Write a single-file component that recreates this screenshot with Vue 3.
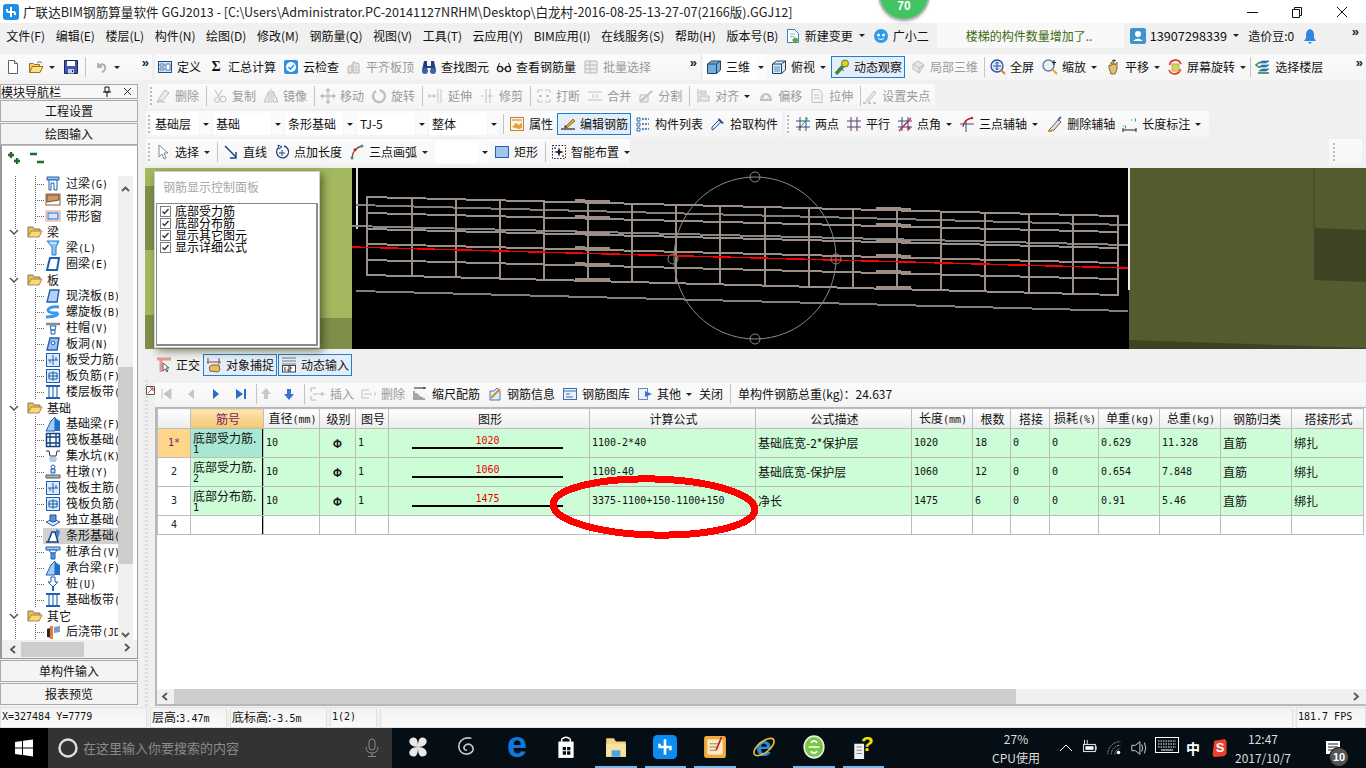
<script setup>
import { h } from 'vue'

const I = {
  app: '<rect x="0" y="0" width="16" height="16" rx="3" fill="#1d8fe8"/><path d="M8 3v10M4 8h8M4 5v3M12 8v3" stroke="#fff" stroke-width="2" fill="none"/>',
  new: '<path d="M3.500 1.500h6l3 3v10h-9z" fill="#fff" stroke="#5a6478"/><path d="M9.500 1.500v3h3" fill="#dfe4ee" stroke="#5a6478"/>',
  open: '<path d="M1.500 13.500v-9h4l1 1h5v2" fill="#f3cf63" stroke="#9b7418"/><path d="M1.500 13.500l3-6h10.500l-3 6z" fill="#fbe08a" stroke="#9b7418"/><path d="M9 4q3-3 5 0" fill="none" stroke="#3a8a4a"/>',
  save: '<path d="M1.500 1.500h13v13h-13z" fill="#3f57b8" stroke="#1c2450"/><path d="M4 2h8v5H4z" fill="#fff"/><path d="M5 10h6v4.500H5z" fill="#c8d0e8"/><path d="M9 11h1v2H9z" fill="#223"/>',
  undo: '<path d="M5 4v4h4M5.500 7.500C8 4 13 5 12 10q-.5 2-3 3.500" fill="none" stroke="#b0b0b0" stroke-width="2"/>',
  def: '<rect x="1.500" y="2.500" width="13" height="11" fill="#cfe3f7" stroke="#1f4f8f"/><path d="M3 5h4v2H3zM3 9h4v2H3zM9 5h4v6H9z" fill="#fff" stroke="#1f4f8f" stroke-width=".7"/>',
  cloud: '<rect x="1" y="1" width="14" height="14" rx="2" fill="#2f8fe0"/><circle cx="8" cy="8" r="5" fill="#fff"/><path d="M5.500 8l2 2 3.500-4" fill="none" stroke="#2f8fe0" stroke-width="1.600"/>',
  flat: '<path d="M2 14V8l4-2v8zM7 14V3l6 2v9z" fill="#e4e4e4" stroke="#b4b4b4"/><path d="M9 8h2M9 11h2" stroke="#b4b4b4"/>',
  binoc: '<path d="M3 2h3v5h4V2h3l2 9H10V9H6v2H1z" fill="#23407e"/><circle cx="4" cy="12" r="3" fill="#3d62aa"/><circle cx="12" cy="12" r="3" fill="#3d62aa"/>',
  glass: '<circle cx="4" cy="10" r="2.600" fill="none" stroke="#222" stroke-width="1.400"/><circle cx="12" cy="10" r="2.600" fill="none" stroke="#222" stroke-width="1.400"/><path d="M6.500 10h3M1.500 9l2-5M14.500 9l-2-5" stroke="#222" fill="none"/>',
  batch: '<path d="M2 2h12v12H2zM2 6h12M2 10h12M7 2v12" fill="#ededed" stroke="#b8b8b8"/>',
  doc: '<path d="M2.500 1.500h7l4 4v9h-11z" fill="#fff" stroke="#3f7fc2"/><path d="M5 6h5M5 8.500h4" stroke="#8ab0d8"/><path d="M10 9l4 3-4 3.500-3-3.500z" fill="#5aa832"/>',
  bot: '<ellipse cx="8" cy="8" rx="7" ry="7" fill="#2f9be8"/><circle cx="5.500" cy="7" r="1.500" fill="#fff"/><circle cx="10.500" cy="7" r="1.500" fill="#fff"/><path d="M5 10.500q3 2 6 0" stroke="#fff" fill="none"/>',
  user: '<rect x="0" y="0" width="16" height="16" rx="2" fill="#3d94cf"/><circle cx="8" cy="6" r="3" fill="#fff"/><path d="M3 13q5-5 10 0z" fill="#fff"/>',
  bell: '<path d="M8 1q-4 1-4 6v3l-2 3h12l-2-3V7q0-5-4-6z" fill="#2f86ea"/><path d="M6 14h4l-2 2z" fill="#2f86ea"/>',
  cube: '<path d="M1.500 5l4-3h9v9l-4 3.500h-9z" fill="#6fb0dc" stroke="#24405c"/><path d="M1.500 5h9v9.500M10.500 5l4-3" fill="none" stroke="#24405c"/>',
  top: '<path d="M1.500 5l4-3h9v9l-4 3.500h-9z" fill="#dcecf8" stroke="#24405c"/><path d="M1.500 5h9v9.500M10.500 5l4-3" fill="none" stroke="#24405c"/><path d="M3 7h6v6H3z" fill="#8fc0e2"/>',
  orbit: '<path d="M2 15L9 7" stroke="#3e8a3e" stroke-width="3.500"/><circle cx="11" cy="4.500" r="3.500" fill="#d9d22a" stroke="#6a7a20"/><path d="M4 10q4-1 6 2" stroke="#2a6a9a" fill="none"/>',
  local: '<path d="M3 5l5-3 6 4-5 8-6-4z" fill="#e6e6e6" stroke="#bcbcbc"/><path d="M3 5l6 4 5-3M9 9v5" fill="none" stroke="#bcbcbc"/>',
  full: '<circle cx="7" cy="7" r="6" fill="#dbe8f8" stroke="#28509c" stroke-width="1.300"/><path d="M7 3v8M3 7h8M5.500 4.500L7 3l1.500 1.500M5.500 9.500L7 11l1.500-1.500" stroke="#28509c" fill="none"/><path d="M11 11l4 4" stroke="#d8841c" stroke-width="2"/>',
  zoom: '<circle cx="6.500" cy="6.500" r="5.500" fill="#e8f0f8" stroke="#6c7c90" stroke-width="1.400"/><path d="M11 11l4 4" stroke="#d8b01c" stroke-width="2.200"/><path d="M12 1v5M10 3.500h4" stroke="#222"/>',
  pan: '<path d="M4 9V6l2 1V3l2 3V2l2 4 2-3v7l-2 5H6z" fill="#e0bc7a" stroke="#8a6a2a"/><path d="M9 0v3M7 1.500h4" stroke="#555"/>',
  rot: '<path d="M2.500 6A6 6 0 0 1 14 5M13.500 10A6 6 0 0 1 2 11" stroke="#e0382c" stroke-width="1.600" fill="none"/><rect x="5" y="5" width="7" height="7" fill="#bfdc78" stroke="#e0a030"/>',
  floors: '<path d="M4 4l3-2h7l-3 2zM4 8l3-2h7l-3 2zM4 12l3-2h7l-3 2z" fill="#2c7fc0" stroke="#1c5a90" stroke-width=".6"/><path d="M5 3L1 6l4 3" stroke="#2a9a3c" stroke-width="1.500" fill="none"/><path d="M3 14h11" stroke="#2a7a3c" stroke-width="1.500"/>',
  del: '<path d="M2 14l3-5 5-7 4 3-6 7z" fill="#ececec" stroke="#bcbcbc"/><path d="M2 14h8" stroke="#bcbcbc"/>',
  copy: '<path d="M3 2l4 7M10 2L6 9" stroke="#bcbcbc" fill="none"/><circle cx="5" cy="12" r="2.400" fill="none" stroke="#bcbcbc"/><circle cx="11" cy="11" r="3" fill="none" stroke="#bcbcbc"/>',
  mirror: '<path d="M8 1v14M6 3L1 14h5zM10 3l5 11h-5z" fill="#eee" stroke="#bcbcbc"/>',
  move: '<path d="M8 1v14M1 8h14M6 3l2-2 2 2M6 13l2 2 2-2M3 6L1 8l2 2M13 6l2 2-2 2" stroke="#bcbcbc" fill="none" stroke-width="1.300"/>',
  rotate: '<path d="M11 3a6 6 0 1 1-6 0" stroke="#c0c0c0" stroke-width="2.400" fill="none"/><path d="M8 1l4 1-2 3z" fill="#c0c0c0"/>',
  extend: '<path d="M1 8h8M1 6v4M6 6v4" stroke="#c0c0c0"/><path d="M10 1v14M13 1v14" stroke="#c8c8c8"/>',
  trim: '<path d="M7 1v14M11 1v14M2 8h3M9 8h5" stroke="#c0c0c0"/>',
  brk: '<path d="M2 5V2h5M14 5V2H9M2 11v3h5M14 11v3H9" stroke="#c0c0c0" fill="none"/><path d="M3 8h3M13 8h-3" stroke="#c0c0c0" stroke-width="2"/>',
  merge: '<path d="M1 4h14M1 12h14M5 6l2 2-2 2M11 6L9 8l2 2" stroke="#c0c0c0" fill="none"/>',
  split: '<path d="M2 14V7l8 0v7z" fill="#eee" stroke="#bcbcbc"/><path d="M3 13L14 3" stroke="#c0c0c0" stroke-width="2"/>',
  align: '<path d="M3 1v14" stroke="#b8b8b8"/><path d="M5 3h6v3H5zM5 8h9v5H5z" fill="#e8e8e8" stroke="#bcbcbc"/>',
  offset: '<path d="M3 12a5 6 0 1 1 10 0z" fill="none" stroke="#c0c0c0" stroke-width="2"/><circle cx="8" cy="9" r="2.500" fill="none" stroke="#c8c8c8"/>',
  stretch: '<path d="M3 1.500h7l3 3v10H3z" fill="#f4f4f4" stroke="#c0c0c0"/><path d="M5 7h5M5 10h6" stroke="#c8c8c8"/>',
  setgrip: '<path d="M4 13L12 3l2 2-7 8z" fill="#ececec" stroke="#c0c0c0"/><path d="M1 15h3M6 15h3M11 15h3" stroke="#b8b8b8" stroke-width="1.500"/>',
  attr: '<rect x="1.500" y="1.500" width="13" height="13" fill="#fbf3df" stroke="#c9822a"/><path d="M3 11l4-4 3 2 3-3v6l-3 1z" fill="#dba23f"/><path d="M3 4h10" stroke="#c9822a"/>',
  edit: '<path d="M1 13h14" stroke="#222" stroke-width="1.200"/><path d="M5 11l8-8 2 2-8 7z" fill="#e4a530" stroke="#7a5012" stroke-width=".7"/><path d="M4 12l1-3 2 2z" fill="#333"/>',
  list: '<path d="M2 2h3v3H2zM2 7h3v3H2zM2 12h3v3H2z" fill="#fff" stroke="#2c6ab0"/><path d="M7 3h7M7 8h7M7 13h7" stroke="#2c6ab0" stroke-width="1.300" stroke-dasharray="2 1"/>',
  pick: '<path d="M2 14l2-1 7-7-2-2-7 7z" fill="#d9ebfb" stroke="#245aa0"/><path d="M9 2l5 5-2 1-4-4z" fill="#245aa0"/>',
  two: '<path d="M1 5h14M1 11h14" stroke="#2a4f90"/><path d="M5 1v14M11 1v14" stroke="#2a4f90"/><path d="M3 14L13 2" stroke="#3e9a3e"/><circle cx="5" cy="11" r="1" fill="#c02020"/><circle cx="11" cy="5" r="1" fill="#3e9a3e"/>',
  para: '<path d="M1 5h14M1 11h14" stroke="#2a4f90"/><path d="M5 1v14M11 1v14" stroke="#7a2a4a"/>',
  ang: '<path d="M1 5h14M1 11h14" stroke="#2a4f90"/><path d="M5 1v14M11 1v14" stroke="#2a4f90"/><path d="M2 15L14 2" stroke="#d02020" stroke-width="1.300"/><circle cx="12" cy="12" r="1.500" fill="#d02020"/>',
  tri: '<path d="M1 8h14M7 4v12" stroke="#2a4f90"/><path d="M4 11Q5 3 13 2" stroke="#c02020" fill="none" stroke-width="1.300"/><circle cx="13" cy="2" r="1.200" fill="#c02020"/>',
  delax: '<path d="M1 15l3-3 7-8 3 2-7 8z" fill="#e8ddd0" stroke="#6a5a70"/><path d="M11 4l3-3" stroke="#5a64b0" stroke-width="2"/><path d="M1 15h4" stroke="#d49020" stroke-width="2"/>',
  len: '<path d="M1 12v4M14 12v4M1 14h13" stroke="#222"/><path d="M3 11h1M13 4h1" stroke="#3aa03a" stroke-width="3"/><path d="M1 10h2M9 4h2" stroke="#3aa03a" stroke-dasharray="1 2"/>',
  sel: '<path d="M4 1v12l3-3 2 5 2-1-2-5h4z" fill="#fff" stroke="#7a8aa0"/>',
  line: '<path d="M2 2l11 11" stroke="#1f3f80" stroke-width="1.400"/><path d="M13 8v6H7" stroke="#1f3f80" stroke-width="1.400" fill="none"/>',
  plen: '<path d="M10 2a6 6 0 1 1-6 2" stroke="#1f3f80" stroke-width="1.300" fill="none"/><path d="M4 1l1 4 3-2zM8 6v6M5 9h6" stroke="#1f3f80" fill="none"/>',
  arc: '<path d="M3 14Q4 4 13 2" stroke="#a0463a" stroke-width="1.500" fill="none"/><circle cx="3" cy="14" r="1.500" fill="#2a9a9a"/><circle cx="6" cy="6" r="1.400" fill="#c02020"/><circle cx="13" cy="2" r="1.500" fill="#2a9a9a"/>',
  rect: '<rect x="1.500" y="2.500" width="13" height="11" fill="#a4c4f0" stroke="#2c5fb0"/>',
  smart: '<rect x="1.500" y="1.500" width="13" height="13" fill="#fff" stroke="#222" stroke-dasharray="1.500 1.500"/><path d="M8 3l1.500 5-1.500 5-1.500-5zM3 8l5-1.500 5 1.500-5 1.500z" fill="#223" /><circle cx="4" cy="4" r="1" fill="#1f5fb4"/><circle cx="12" cy="12" r="1" fill="#c03030"/>',
  ortho: '<path d="M1 2h14M5 2v13" stroke="#e49a90" stroke-width="3" fill="none"/><path d="M7 6v8l2-2 2 3 1-1-2-3h3z" fill="#fff" stroke="#556"/>',
  snap: '<path d="M2 1v6M1 5h14M13 1v6" stroke="#a04030"/><path d="M4 14q-2-5 2-6l7 0 1 5-2 2z" fill="#e3bc6c" stroke="#8a6420"/>',
  dyn: '<path d="M1 1h14M1 4h14M1 7h14" stroke="#777"/><rect x="1.500" y="8.500" width="13" height="6.500" fill="#fff" stroke="#444"/><path d="M4 10v4M7 10h3v2H7v2h3" stroke="#222" fill="none"/>',
  first: '<path d="M4 3v10M13 3L6 8l7 5z" fill="#c4c4c4" stroke="#c4c4c4"/>',
  prev: '<path d="M11 3L5 8l6 5z" fill="#c4c4c4"/>',
  next: '<path d="M5 3l6 5-6 5z" fill="#2a6cc8"/>',
  last: '<path d="M12 3v10" stroke="#2a6cc8" stroke-width="2"/><path d="M3 3l7 5-7 5z" fill="#2a6cc8"/>',
  up: '<path d="M8 2l5 6h-3v5H6V8H3z" fill="#c8c8c8"/>',
  down: '<path d="M8 14l5-6h-3V3H6v5H3z" fill="#3a74d0"/>',
  ins: '<path d="M1 2h5M1 2v4M1 10v4h5M9 8h6" stroke="#b8b8b8" fill="none"/><path d="M3 8h5M12 6v4" stroke="#b8b8b8"/>',
  del2: '<path d="M1 4h7M1 12h7M1 4v8" stroke="#c0c0c0" fill="none"/><path d="M3 8h8M13 6l2 2-2 2" stroke="#c0c0c0" fill="none"/>',
  scale: '<path d="M2 2h12M12 1v2" stroke="#222"/><path d="M2 5v9M4 7v7M6 8v6M8 10v4M10 11v3" stroke="#555"/><path d="M12 12v2" stroke="#555"/>',
  info: '<path d="M3 14V5h4l3-3 3 3v9z" fill="#dfe9f7" stroke="#4a78b8"/><path d="M4 12L13 3" stroke="#d08f30" stroke-width="2"/>',
  lib: '<rect x="1.500" y="2.500" width="13" height="11" fill="#eaf2fb" stroke="#3b6fb0"/><path d="M2 5h12M4 8h4M4 11h7" stroke="#3b6fb0"/>',
  other: '<rect x="1.500" y="2.500" width="9" height="11" fill="#eaf2fb" stroke="#6f8aa8"/><path d="M8 5l7 3-7 3z" fill="#3a74d0"/>',
  folder: '<path d="M1 13V3h5l1 2h6v2" fill="#e6c060" stroke="#8c7a4a"/><path d="M1 13l3-6h11l-3 6z" fill="#fdd870" stroke="#a08a50"/>',
  lintel: '<path d="M2 1h12v3H2z" fill="#9ac4ec" stroke="#1f5fb4"/><path d="M4 4h8v10h-3V7H6v7H4z" fill="#fff" stroke="#1f5fb4"/>',
  strip: '<rect x="1" y="2" width="14" height="11" fill="#fff" stroke="#8a5a30"/><path d="M2 3h12v5L2 10z" fill="#c89a6a" stroke="#7a4a20"/>',
  win: '<rect x="1" y="3" width="14" height="10" fill="#eef" stroke="#e8a08a"/><rect x="3" y="5" width="10" height="6" fill="#d4e4fa" stroke="#2c6ac0"/>',
  beam: '<path d="M2 1h12l-3 6v8H7V7z" fill="#8ec4ee" stroke="#1f7fd0"/><path d="M5 3h6" stroke="#fff"/>',
  ring: '<path d="M5 2h9l-2 12H2z" fill="#fff" stroke="#1f5fb4" stroke-width="2"/>',
  slab: '<path d="M5 2h9l-2 12H2z" fill="#b4d0f4" stroke="#1f5fb4" stroke-width="1.400"/>',
  spiral: '<path d="M14 3Q5 2 3 6q0 3 9 3 3 3-11 4" stroke="#3a9ae8" stroke-width="3" fill="none"/>',
  cap: '<path d="M1 4h14" stroke="#808a98" stroke-width="2.500"/><path d="M5 6h6l-1 4H6zM6 10h4v4H6z" fill="#fff" stroke="#1f5fb4"/>',
  hole: '<path d="M5 2h9l-2 12H2z" fill="#9ec0ee" stroke="#1f5fb4" stroke-width="1.400"/><circle cx="8" cy="7" r="1.800" fill="#fff" stroke="#1f5fb4"/>',
  grid1: '<rect x="1.500" y="1.500" width="13" height="13" fill="#dceafa" stroke="#1f5fb4"/><path d="M3 8h10M8 3v10M5 11V8M11 8V5" stroke="#1f5fb4" fill="none"/>',
  grid2: '<rect x="1.500" y="1.500" width="13" height="13" fill="#dceafa" stroke="#1f5fb4"/><path d="M3 8h10M8 3v10M4 5h8v6H4z" stroke="#1f5fb4" fill="none"/>',
  band: '<path d="M1 2h14M1 14h14" stroke="#1f5fb4" stroke-width="2"/><path d="M4 3v10M12 3v10M8 3v10" stroke="#5a90d0" stroke-width="1.500"/>',
  fbeam: '<path d="M1 15L6 5l4-4v14z" fill="#a8ccf0" stroke="#1f5fb4"/><path d="M10 2l5 3v10h-5z" fill="#1f6fc8"/>',
  raft: '<rect x="1.500" y="1.500" width="13" height="13" fill="#fff" stroke="#123f80" stroke-width="1.500"/><path d="M5 2v12M11 2v12M2 5h12M2 11h12" stroke="#123f80" stroke-width="1.300"/>',
  pit: '<path d="M1 3h3l1 5h6l1-5h3" stroke="#333" fill="none"/><path d="M4 9h8l-1 5H5z" fill="#a8cdf2"/>',
  pier: '<circle cx="8" cy="3" r="2" fill="#fff" stroke="#1f5fb4"/><path d="M6 5h4v4H6z" fill="#c8daf0" stroke="#1f5fb4"/><path d="M1 11h14v3H1z" fill="#aab6c6" stroke="#505a68"/>',
  iso: '<path d="M1 10l7-3 7 3-7 4z" fill="#dde9f8" stroke="#1f5fb4"/><path d="M5 3h6v6l-3 1-3-1z" fill="#5a90d8" stroke="#1f4f9a"/>',
  sf: '<path d="M1 14h12M3 14l4-10h3l3 10z" fill="#fff" stroke="#123f80" stroke-width="1.500"/><path d="M11 1l4 2-2 8-2-6z" fill="#3a80d0"/>',
  pilecap: '<path d="M1 3h14v3H1z" fill="#a8ccf0" stroke="#1f5fb4"/><path d="M4 6h8l-2 3H6z" fill="#fff" stroke="#1f5fb4"/><path d="M6 9h4v6H6z" fill="#5a90d8" stroke="#1f5fb4"/>',
  pile: '<path d="M6 1h4v5h3l-5 5-5-5h3z" fill="#fff" stroke="#1f5fb4"/><path d="M8 11v4" stroke="#1f5fb4" stroke-width="2"/>',
  post: '<path d="M2 5l6-2v11l-6-1z" fill="#3a2418"/><path d="M5 2h3v13H5z" fill="#e08040"/><path d="M9 3l6-1v6l-6 1z" fill="#7a9cd0"/>',
  eave: '<rect x="1" y="0" width="14" height="16" fill="#e89868"/>',
  pinwheel: '<g fill="#e8e8e8"><path d="M11 11C5 11 3 8 3 5.500S7 1 9 3c2 1.500 2 6 2 8z"/><path d="M11 11C17 11 19 8 19 5.500S15 1 13 3c-2 1.500-2 6-2 8z"/><path d="M11 11C5 11 3 14 3 16.500S7 21 9 19c2-1.500 2-6 2-8z"/><path d="M11 11C17 11 19 14 19 16.500S15 21 13 19c-2-1.500-2-6-2-8z"/></g>',
  swirl: '<path d="M15 3C7 1 2 7 4 13c2 5 9 6 12 2 2-4-2-8-6-6-3 2-2 5 1 5" fill="none" stroke="#c8c8c8" stroke-width="1.500"/>',
  edge: '<text x="11" y="20" text-anchor="middle" font-family="Liberation Sans" font-weight="700" font-size="33" fill="#0f78d8">e</text>',
  store: '<path d="M7 7V4q4-4 8 0v3" fill="none" stroke="#fff" stroke-width="1.300"/><path d="M4 6h14v15H4z" fill="#fff"/><path d="M8 11h3v3H8zM12 11h3v3h-3zM8 15h3v3H8zM12 15h3v3h-3z" fill="#050e14"/>',
  explorer: '<path d="M2 3h7l2 3h9v14H2z" fill="#f3d27a"/><path d="M2 8h18v12H2z" fill="#f8e3a2"/><path d="M7 14h8v6H7z" fill="#4aa6e0"/>',
  blue: '<rect x="0" y="0" width="22" height="22" rx="4" fill="#0b8cf0"/><path d="M11 4v14M5 11h12M6 8v3M16 11v3" stroke="#fff" stroke-width="2.400" fill="none"/>',
  note: '<rect x="1" y="1" width="20" height="20" rx="2" fill="#f2a93c"/><rect x="4" y="4" width="14" height="14" fill="#f7ebc8"/><path d="M6 8h8M6 11h8M6 14h6" stroke="#b08050"/><path d="M17 2l-5 12" stroke="#c02020" stroke-width="1.500"/>',
  ie: '<text x="11" y="19" text-anchor="middle" font-family="Liberation Sans" font-weight="700" font-size="26" fill="#2a8ae0">e</text><ellipse cx="11" cy="11" rx="11" ry="5" transform="rotate(-38 11 11)" fill="none" stroke="#e8c030" stroke-width="1.500"/>',
  greene: '<ellipse cx="11" cy="11" rx="9" ry="10" fill="#78c848" stroke="#e8f0e0" stroke-width="1.500"/><path d="M6 11h10M8 7q3-3 6 0M8 15q3 3 6 0" stroke="#fff" stroke-width="1.600" fill="none"/>',
  help: '<path d="M3 8h9v14H3z" fill="#f0f0f0"/><path d="M5 11h5M5 14h5M5 17h5" stroke="#888"/><text x="15" y="15" text-anchor="middle" font-family="Liberation Sans" font-weight="700" font-size="19" fill="#f0e010">?</text>',
  battery: '<rect x="4" y="6" width="13" height="8" fill="none" stroke="#fff"/><rect x="6" y="8" width="9" height="4" fill="#fff"/><path d="M18 8v4" stroke="#fff"/><path d="M5 1v5M8 1v5" stroke="#fff"/>',
  wifi: '<path d="M3 17A14 14 0 0 1 17 3M7 17A10 10 0 0 1 17 7M11 17a6 6 0 0 1 6-6" stroke="#aaa" fill="none" stroke-dasharray="2 1"/><circle cx="15" cy="15" r="2" fill="#fff"/>',
  sound: '<path d="M2 7h4l5-4v14l-5-4H2z" fill="none" stroke="#ddd"/><path d="M13 6q2 4 0 8M16 4q3 6 0 12" stroke="#ddd" fill="none"/>',
  kbd: '<rect x=".500" y="1.500" width="23" height="15" fill="none" stroke="#fff"/><path d="M3 5h18M3 8h18M3 11h18" stroke="#fff" stroke-dasharray="1.500 1"/><path d="M6 14h12" stroke="#fff"/>',
  sogou: '<path d="M4 2l13-2 2 3v15l-3 3-13 1-1-4z" fill="#e8432a"/>',
}

const Ic = (p) => h('svg', { class: 'ic', viewBox: `0 0 ${p.v || 16} ${p.v || 16}`, width: p.s || 16, height: p.s || 16, innerHTML: I[p.n] })
Ic.props = ['n', 's', 'v']

const ml = (it) => (it.m != null ? { marginLeft: it.m + 'px' } : null)
const Tb = (p) =>
  p.items.map((it) => {
    if (it.g) return h('span', { class: 'tb-grip' })
    if (it.sp) return h('span', { class: 'tb-sep', style: ml(it) })
    if (it.c !== undefined) {
      return h('span', { class: 'tb-combo', style: ml(it) }, [
        h('span', { class: 'tb-combo-t', style: { width: it.w + 'px' } }, it.c),
        h('span', { class: 'tb-combo-a' }, [h('i', { class: 'tb-drop' })]),
      ])
    }
    return h('span', { class: ['tb-it', it.off && 'off', it.on && 'on', it.cell === 1 && 'cell', it.cell === 2 && 'cell2'], style: ml(it) }, [
      it.i ? h(Ic, { n: it.i }) : null,
      it.sym ? h('b', { class: 'tb-sym' }, it.sym) : null,
      it.t ? h('span', { class: 'tb-t' }, it.t) : null,
      it.d ? h('i', { class: 'tb-drop' }) : null,
    ])
  })
Tb.props = ['items']

const row1a = [
  { i: 'new', m: 5 }, { i: 'open', m: 4, d: 1 }, { i: 'save', m: 5 }, { sp: 1, m: 3 }, { i: 'undo', m: 6, d: 1 },
]
const row1b = [
  { i: 'def', t: '定义' }, { sym: 'Σ', t: '汇总计算' }, { i: 'cloud', t: '云检查' }, { i: 'flat', t: '平齐板顶', off: 1 },
  { i: 'binoc', t: '查找图元' }, { i: 'glass', t: '查看钢筋量' }, { i: 'batch', t: '批量选择', off: 1 },
]
const row1c = [
  { i: 'cube', t: '三维', cell: 1 }, { cell: 2, d: 1, m: -8 }, { i: 'top', t: '俯视', d: 1, m: -3 }, { i: 'orbit', t: '动态观察', on: 1, m: -3 }, { i: 'local', t: '局部三维', off: 1, m: -3 }, { sp: 1, m: -2 },
  { i: 'full', t: '全屏', m: -1 }, { i: 'zoom', t: '缩放', d: 1 }, { i: 'pan', t: '平移', d: 1 }, { i: 'rot', t: '屏幕旋转', d: 1, m: -1 }, { sp: 1, m: -4 }, { i: 'floors', t: '选择楼层', m: -2 },
]
const row2 = [
  { g: 1 }, { i: 'del', t: '删除', off: 1, m: -6 }, { sp: 1 }, { i: 'copy', t: '复制', off: 1 }, { i: 'mirror', t: '镜像', off: 1 }, { sp: 1 },
  { i: 'move', t: '移动', off: 1 }, { i: 'rotate', t: '旋转', off: 1 }, { sp: 1 }, { i: 'extend', t: '延伸', off: 1 }, { i: 'trim', t: '修剪', off: 1 }, { sp: 1 },
  { i: 'brk', t: '打断', off: 1 }, { i: 'merge', t: '合并', off: 1 }, { i: 'split', t: '分割', off: 1 }, { sp: 1 },
  { i: 'align', t: '对齐', off: 1, d: 1 }, { i: 'offset', t: '偏移', off: 1, m: 1 }, { i: 'stretch', t: '拉伸', off: 1 }, { sp: 1 }, { i: 'setgrip', t: '设置夹点', off: 1, m: -4 },
]
const row3a = [
  { g: 1 }, { c: '基础层', w: 47, m: -7 }, { c: '基础', w: 58 }, { c: '条形基础', w: 58 }, { c: 'TJ-5', w: 58 }, { c: '整体', w: 58 }, { sp: 1, m: 2 },
  { i: 'attr', t: '属性' }, { i: 'edit', t: '编辑钢筋', on: 1, m: -3 }, { i: 'list', t: '构件列表', m: -3 }, { i: 'pick', t: '拾取构件' },
]
const row3b = [
  { g: 1 }, { i: 'two', t: '两点', m: -3 }, { i: 'para', t: '平行' }, { i: 'ang', t: '点角', d: 1 }, { i: 'tri', t: '三点辅轴', d: 1 }, { i: 'delax', t: '删除辅轴', m: 2 }, { i: 'len', t: '长度标注', d: 1 },
]
const row4 = [
  { g: 1 }, { i: 'sel', t: '选择', d: 1, m: -4 }, { sp: 1 }, { i: 'line', t: '直线' }, { i: 'plen', t: '点加长度' }, { i: 'arc', t: '三点画弧', d: 1 },
  { c: '', w: 43 }, { i: 'rect', t: '矩形', m: 2 }, { sp: 1 }, { i: 'smart', t: '智能布置', d: 1 },
]
const snapItems = [
  { i: 'ortho', t: '正交' }, { i: 'snap', t: '对象捕捉', on: 1, m: -1 }, { i: 'dyn', t: '动态输入', on: 1, m: -3 },
]
const gridBar = [
  { i: 'first', m: 1 }, { i: 'prev', m: 2 }, { i: 'next', m: 2 }, { i: 'last', m: 2 }, { sp: 1 }, { i: 'up', m: -4 }, { i: 'down' }, { sp: 1 },
  { i: 'ins', t: '插入', off: 1 }, { i: 'del2', t: '删除', off: 1 }, { i: 'scale', t: '缩尺配筋' }, { i: 'info', t: '钢筋信息' }, { i: 'lib', t: '钢筋图库' },
  { i: 'other', t: '其他', d: 1 }, { t: '关闭', m: 0 }, { sp: 1 }, { t: '单构件钢筋总重(kg)：24.637', m: 2 },
]

const menus = ['文件(F)', '编辑(E)', '楼层(L)', '构件(N)', '绘图(D)', '修改(M)', '钢筋量(Q)', '视图(V)', '工具(T)', '云应用(Y)', 'BIM应用(I)', '在线服务(S)', '帮助(H)', '版本号(B)']

const tree = [
  { i: 'lintel', n: '过梁', k: '(G)' }, { i: 'strip', n: '带形洞' }, { i: 'win', n: '带形窗' },
  { g: 1, n: '梁' }, { i: 'beam', n: '梁', k: '(L)' }, { i: 'ring', n: '圈梁', k: '(E)' },
  { g: 1, n: '板' }, { i: 'slab', n: '现浇板', k: '(B)' }, { i: 'spiral', n: '螺旋板', k: '(B)' }, { i: 'cap', n: '柱帽', k: '(V)' }, { i: 'hole', n: '板洞', k: '(N)' },
  { i: 'grid1', n: '板受力筋', k: '(' }, { i: 'grid2', n: '板负筋', k: '(F)' }, { i: 'band', n: '楼层板带', k: '(' },
  { g: 1, n: '基础' }, { i: 'fbeam', n: '基础梁', k: '(F)' }, { i: 'raft', n: '筏板基础', k: '(' }, { i: 'pit', n: '集水坑', k: '(K)' }, { i: 'pier', n: '柱墩', k: '(Y)' },
  { i: 'grid1', n: '筏板主筋', k: '(' }, { i: 'grid2', n: '筏板负筋', k: '(' }, { i: 'iso', n: '独立基础', k: '(' }, { i: 'sf', n: '条形基础', k: '(', sel: 1 },
  { i: 'pilecap', n: '桩承台', k: '(V)' }, { i: 'fbeam', n: '承台梁', k: '(F)' }, { i: 'pile', n: '桩', k: '(U)' }, { i: 'band', n: '基础板带', k: '(' },
  { g: 1, n: '其它' }, { i: 'post', n: '后浇带', k: '(JD' }, { i: 'eave', n: '挑檐', k: '(T)' },
]

const X0 = 367
const X1 = 1118
const yAt = (a, b, x) => a + ((b - a) * (x - X0)) / (X1 - X0)
const rebarY = [[197, 216], [213, 232], [229, 248], [244, 263], [260, 279], [275, 295]]
const bars = []
const L = (x1, y1, x2, y2, c, w) => bars.push({ x1, y1, x2, y2, c, w })
L(356, 205, 1128, 225, '#808080', 2)
L(352, 226, 1128, 245, '#858585', 2)
L(356, 291, 1128, 311, '#808080', 2)
for (const [a, b] of rebarY) L(X0, a, X1, b, '#9d9088', 2)
for (const x of [X0, 412, 456, 500, 544, 588, 632, 676, 720, 765, 809, 853, 897, 941, 985, 1029, 1073, X1]) {
  L(x, yAt(197, 216, x) - 1, x, yAt(275, 295, x) + 1, '#9d9088', 2)
}
for (const [a, b] of rebarY) {
  for (const x of [575, 876]) L(x, yAt(a, b, x) - 1, x + 35, yAt(a, b, x + 35) - 1, '#9d9088', 4)
}
const reds = { x1: 352, y1: 247, x2: 1128, y2: 268 }
const circles = [[755, 177], [755, 339], [673, 259], [836, 259]]

const head = [
  ['筋号'], ['直径', '(mm)'], ['级别'], ['图号'], ['图形'], ['计算公式'], ['公式描述'], ['长度', '(mm)'], ['根数'], ['搭接'], ['损耗', '(%)'], ['单重', '(kg)'], ['总重', '(kg)'], ['钢筋归类'], ['搭接形式'],
]
const widths = [33, 73, 56, 36, 33, 201, 166, 156, 61, 38, 39, 49, 61, 61, 71, 72]
const rows = [
  { no: '1*', a: '底部受力筋.', b: '1', fig: '1020', f: '1100-2*40', d: '基础底宽-2*保护层', len: '1020', cnt: '18', w: '0.629', tw: '11.328' },
  { no: '2', a: '底部受力筋.', b: '2', fig: '1060', f: '1100-40', d: '基础底宽-保护层', len: '1060', cnt: '12', w: '0.654', tw: '7.848' },
  { no: '3', a: '底部分布筋.', b: '1', fig: '1475', f: '3375-1100+150-1100+150', d: '净长', len: '1475', cnt: '6', w: '0.91', tw: '5.46' },
]
const checks = ['底部受力筋', '底部分布筋', '显示其它图元', '显示详细公式']
const apps = [
  { n: 'pinwheel' }, { n: 'swirl' }, { n: 'edge' }, { n: 'store' }, { n: 'explorer', u: 1 }, { n: 'blue', u: 1 },
  { n: 'note', u: 1 }, { n: 'ie' }, { n: 'greene', u: 1 }, { n: 'help', u: 1 },
]
</script>

<template>
  <div class="app">
    <header class="title">
      <Ic n="app" class="t-ico" />
      <span class="t-text">广联达BIM钢筋算量软件 GGJ2013 - [C:\Users\Administrator.PC-20141127NRHM\Desktop\白龙村-2016-08-25-13-27-07(2166版).GGJ12]</span>
      <div class="win">
        <svg width="12" height="12" viewBox="0 0 12 12"><path d="M1 6.500h11" stroke="#111" /></svg>
        <svg width="12" height="12" viewBox="0 0 12 12"><path d="M1.500 3.500h7v8h-7zM3.500 3.500v-2h7v8h-2" fill="none" stroke="#111" /></svg>
        <svg width="12" height="12" viewBox="0 0 12 12"><path d="M1 1l10 10M11 1L1 11" stroke="#111" /></svg>
      </div>
      <div class="badge">70</div>
    </header>

    <nav class="menu">
      <span v-for="m in menus" :key="m" class="mi">{{ m }}</span>
      <span class="mx mx-new"><Ic n="doc" /><span>新建变更</span><i class="tb-drop" /></span>
      <span class="mx mx-bot"><Ic n="bot" /><span>广小二</span></span>
      <span class="notice">楼梯的构件数量增加了..</span>
      <span class="acct">
        <Ic n="user" /><span class="phone">13907298339</span><i class="tb-drop" /><span class="bean">造价豆:0</span><Ic n="bell" />
      </span>
      <span class="more mmore">»</span>
    </nav>

    <div class="row1">
      <div class="tb-chunk c1"><Tb :items="row1a" /><span class="more">»</span></div>
      <div class="tb-chunk c2"><Tb :items="row1b" /><span class="more">»</span></div>
      <div class="tb-chunk c3"><Tb :items="row1c" /><span class="more last">»</span></div>
    </div>

    <div class="body">
      <aside class="nav">
        <div class="nav-head"><span>模块导航栏</span><span class="pin">
          <svg width="10" height="12" viewBox="0 0 10 12"><path d="M3 1h4v5H3zM1 6h8M5 6v5" fill="none" stroke="#111" /></svg>
          <svg width="9" height="9" viewBox="0 0 9 9"><path d="M1 1l7 7M8 1L1 8" stroke="#333" /></svg>
        </span></div>
        <div class="nav-btn">工程设置</div>
        <div class="nav-btn">绘图输入</div>
        <div class="tree-box">
          <div class="tree-tools">
            <svg width="16" height="14" viewBox="0 0 16 14"><path d="M4 1v6M1 4h6M10 7v6M7 10h6" stroke="#1f6b2c" stroke-width="2.400" /></svg>
            <svg width="16" height="14" viewBox="0 0 16 14"><path d="M1 3h7M8 11h7" stroke="#1f6b2c" stroke-width="2.400" /></svg>
          </div>
          <div class="tree-main">
            <div class="tree">
              <div v-for="(t, i) in tree" :key="i" class="tr" :class="t.g ? 'tr-g' : 'tr-c'">
                <template v-if="t.g">
                  <svg class="chev" width="10" height="6" viewBox="0 0 10 6"><path d="M1 1l4 4 4-4" fill="none" stroke="#555" stroke-width="1.500" /></svg>
                  <Ic n="folder" />
                  <span class="tr-n">{{ t.n }}</span>
                </template>
                <span v-else class="tr-in" :class="{ sel: t.sel }">
                  <Ic :n="t.i" /><span class="tr-n">{{ t.n }}<span class="mono" v-if="t.k">{{ t.k }}</span></span>
                </span>
              </div>
            </div>
            <div class="vbar">
              <svg width="15" height="10" viewBox="0 0 15 10"><path d="M4 7l3.500-3.500L11 7" fill="none" stroke="#555" stroke-width="1.800" /></svg>
              <div class="vthumb"></div>
              <svg width="15" height="10" viewBox="0 0 15 10"><path d="M4 3l3.500 3.500L11 3" fill="none" stroke="#555" stroke-width="1.800" /></svg>
            </div>
          </div>
          <div class="hbar nav-hbar">
            <svg width="10" height="15" viewBox="0 0 10 15"><path d="M7 4L3 7.500 7 11" fill="none" stroke="#555" stroke-width="1.800" /></svg>
            <div class="hthumb"></div>
            <svg class="hend" width="10" height="15" viewBox="0 0 10 15"><path d="M3 4l4 3.500L3 11" fill="none" stroke="#555" stroke-width="1.800" /></svg>
          </div>
        </div>
        <div class="nav-btn">单构件输入</div>
        <div class="nav-btn">报表预览</div>
      </aside>

      <main class="work">
        <div class="tbrow r2"><div class="tb-chunk"><Tb :items="row2" /></div></div>
        <div class="tbrow r3">
          <div class="tb-chunk"><Tb :items="row3a" /></div>
          <div class="tb-chunk"><Tb :items="row3b" /></div>
        </div>
        <div class="tbrow r4">
          <div class="tb-chunk"><Tb :items="row4" /></div>
          <div class="tb-chunk stub"><span class="tb-grip"></span></div>
        </div>

        <div class="view">
          <svg width="1221" height="181" viewBox="145 168 1221 181" class="scene">
            <rect x="145" y="168" width="207" height="181" fill="#a3b85f" />
            <path d="M145 186h9v64h-9zM145 315h9v34h-9z" fill="#7f8f4a" />
            <path d="M320 318h32v31h-32z" fill="#7f8f4a" />
            <rect x="352" y="168" width="777" height="181" fill="#000" />
            <rect x="1129" y="168" width="237" height="181" fill="#525c2f" />
            <path d="M1314 228l52 2v52l-52-2zM1129 340l237 8v1h-237z" fill="#3d4424" />
            <path d="M1314 168v60" stroke="#3d4424" />
            <path d="M357 168v61" stroke="#ddd" stroke-width="2" />
            <path d="M1129 168v122" stroke="#eee" stroke-width="2" />
            <g shape-rendering="crispEdges">
              <line v-for="(b, i) in bars" :key="i" :x1="b.x1" :y1="b.y1" :x2="b.x2" :y2="b.y2" :stroke="b.c" :stroke-width="b.w" />
              <line v-bind="reds" stroke="#f00" stroke-width="1.500" />
            </g>
            <circle cx="755" cy="258" r="81" fill="none" stroke="#8a8a8a" />
            <circle v-for="c in circles" :key="c[0] + '-' + c[1]" :cx="c[0]" :cy="c[1]" r="5" fill="none" stroke="#8a8a8a" />
          </svg>
          <div class="panel">
            <div class="panel-t">钢筋显示控制面板</div>
            <div class="panel-l">
              <label v-for="c in checks" :key="c" class="chk">
                <svg width="11" height="11" viewBox="0 0 11 11"><rect x=".500" y=".500" width="10" height="10" fill="#fff" stroke="#808080" /><path d="M2.500 5.500l2 2 4-4.500" fill="none" stroke="#333" stroke-width="1.400" /></svg>
                <span>{{ c }}</span>
              </label>
            </div>
          </div>
        </div>

        <div class="snapbar"><Tb :items="snapItems" /></div>

        <div class="lower">
          <div class="lgrip">
            <svg width="9" height="9" viewBox="0 0 9 9"><path d="M.500 .500h8v8h-8z" fill="#fff" stroke="#555" /><path d="M2 7l5-5M4 2h3v3" fill="none" stroke="#c0392b" /></svg>
          </div>
          <div class="lmain">
            <div class="tb-chunk gridbar"><Tb :items="gridBar" /></div>
            <div class="frame">
              <div class="tablewrap">
                <table class="grid">
                  <colgroup><col v-for="(w, i) in widths" :key="i" :width="w" /></colgroup>
                  <thead>
                    <tr>
                      <th></th>
                      <th v-for="(c, i) in head" :key="i" :class="{ hot: i === 0 }">{{ c[0] }}<span v-if="c[1]" class="mono">{{ c[1] }}</span></th>
                    </tr>
                  </thead>
                  <tbody>
                    <tr v-for="(r, i) in rows" :key="i" class="rb">
                      <td class="no mono" :class="{ cur: i === 0 }">{{ r.no }}</td>
                      <td class="nm" :class="{ act: i === 0 }"><div>{{ r.a }}</div><div class="mono">{{ r.b }}</div></td>
                      <td class="mono">10</td>
                      <td class="ctr">Φ</td>
                      <td class="mono">1</td>
                      <td class="figc"><div class="fig"><span>{{ r.fig }}</span></div></td>
                      <td class="mono">{{ r.f }}</td>
                      <td>{{ r.d }}</td>
                      <td class="mono">{{ r.len }}</td>
                      <td class="mono">{{ r.cnt }}</td>
                      <td class="mono">0</td>
                      <td class="mono">0</td>
                      <td class="mono">{{ r.w }}</td>
                      <td class="mono">{{ r.tw }}</td>
                      <td>直筋</td>
                      <td>绑扎</td>
                    </tr>
                    <tr class="re">
                      <td class="no mono">4</td>
                      <td class="nm"></td>
                      <td v-for="n in 14" :key="n"></td>
                    </tr>
                  </tbody>
                </table>
                <svg class="ring" width="220" height="72" viewBox="0 0 220 72" shape-rendering="crispEdges">
                  <ellipse cx="110" cy="36" rx="101" ry="28" transform="rotate(1.500 110 36)" fill="none" stroke="#f00" stroke-width="7" />
                </svg>
              </div>
              <div class="hbar main-hbar">
                <svg width="10" height="15" viewBox="0 0 10 15"><path d="M7 4L3 7.500 7 11" fill="none" stroke="#555" stroke-width="1.800" /></svg>
                <div class="mthumb"></div>
                <svg class="hend" width="10" height="15" viewBox="0 0 10 15"><path d="M3 4l4 3.500L3 11" fill="none" stroke="#555" stroke-width="1.800" /></svg>
              </div>
            </div>
          </div>
        </div>
      </main>
    </div>

    <footer class="status">
      <span class="st s1">X=327484 Y=7779</span>
      <span class="st s2">层高:<span class="mono">3.47m</span></span>
      <span class="st s3">底标高:<span class="mono">-3.5m</span></span>
      <span class="st s4 mono">1(2)</span>
      <span class="st s5"></span>
      <span class="st s6 mono">181.7 FPS</span>
    </footer>

    <div class="task">
      <div class="start">
        <svg width="18" height="18" viewBox="0 0 18 18"><path d="M0 3l7-1v6.500H0zM8 1.800L18 .500v8H8zM0 9.500h7V16l-7-1zM8 9.500h10v8L8 16z" fill="#fff" /></svg>
      </div>
      <div class="search">
        <svg width="22" height="22" viewBox="0 0 22 22"><circle cx="11" cy="11" r="8.500" fill="none" stroke="#e0e0e0" stroke-width="2.400" /></svg>
        <span class="s-t">在这里输入你要搜索的内容</span>
        <svg class="mic" width="14" height="20" viewBox="0 0 14 20"><rect x="4" y="1" width="6" height="11" rx="3" fill="none" stroke="#8a8a8a" /><path d="M1 9q0 6 6 6t6-6M7 15v3M3 18.500h8" fill="none" stroke="#8a8a8a" /></svg>
      </div>
      <div class="apps">
        <div v-for="a in apps" :key="a.n" class="appc" :class="{ u: a.u }"><Ic :n="a.n" :s="24" :v="22" /></div>
      </div>
      <div class="tray">
        <div class="cpu"><div>27%</div><div>CPU使用</div></div>
        <svg class="caret" width="14" height="8" viewBox="0 0 14 8"><path d="M1 7l6-6 6 6" fill="none" stroke="#fff" /></svg>
        <Ic n="battery" :s="18" :v="20" />
        <Ic n="wifi" :s="18" :v="20" />
        <Ic n="sound" :s="18" :v="20" />
        <Ic n="kbd" :s="24" :v="24" />
        <span class="zh">中</span>
        <span class="sg"><Ic n="sogou" :s="18" :v="22" /><b>S</b></span>
        <div class="clock"><div>12:47</div><div>2017/10/7</div></div>
        <div class="ntf">
          <svg width="16" height="16" viewBox="0 0 16 16"><path d="M1 1h14v13H1z" fill="#fff" /><path d="M3 4h10M3 7h10M3 10h10" stroke="#222" /></svg>
          <span class="ntb">10</span>
        </div>
      </div>
    </div>
  </div>
</template>

<style>
body { background: #f0f0f0; }
.ic { display: block; flex: none; }
.tb-chunk { display: flex; align-items: center; gap: 7px; height: 100%; background: linear-gradient(#fbfbfb, #f5f5f5); font: 12px/16px "Noto Sans CJK SC", sans-serif; color: #111; }
.tb-it { display: flex; align-items: center; gap: 4px; white-space: nowrap; height: 22px; flex: none; }
.tb-it.off { color: #9a9a9a; }
.tb-it.on { background: #e3eef8; outline: 1px solid #1e7fd6; outline-offset: -1px; padding: 0 3px; }
.tb-it.cell { background: #fff; align-self: stretch; height: auto; padding: 0 5px 0 3px; }
.tb-it.cell2 { background: #fcfcfc; align-self: stretch; height: auto; width: 11px; justify-content: center; }
.tb-it.cell2 .tb-drop { margin: 0; }
.tb-drop { display: inline-block; flex: none; width: 0; height: 0; border: 3px solid transparent; border-top: 3.500px solid #222; border-bottom: 0; margin-left: 1px; }
.tb-sep { width: 1px; height: 20px; background: #c4c4c4; flex: none; margin-right: -2px; }
.tb-grip { width: 2px; height: 18px; flex: none; margin: 0 2px; background: repeating-linear-gradient(#bbb 0 2px, transparent 2px 4px); }
.tb-sym { font: 700 14px "Liberation Serif", serif; width: 16px; text-align: center; }
.tb-combo { display: flex; align-self: center; height: 22px; flex: none; margin-right: -7px; }
.tb-combo-t { background: #fff; padding-left: 3px; line-height: 22px; white-space: nowrap; box-sizing: border-box; }
.tb-combo-a { width: 11px; margin-left: 1px; margin-right: 2px; background: #fbfbfb; display: flex; align-items: center; justify-content: center; }
.tb-combo-a .tb-drop { margin: 0; }
</style>

<style scoped>
.app { width: 1366px; height: 768px; overflow: hidden; background: #f0f0f0; display: flex; flex-direction: column; position: relative; font: 12px/16px "Noto Sans CJK SC", sans-serif; color: #111; }
.mono { font-family: "DejaVu Sans Mono", monospace; font-size: 10px; }

.title { height: 23px; flex: none; background: #fff; display: flex; align-items: center; padding-left: 3px; }
.t-text { margin-left: 4px; font-size: 12.620px; white-space: nowrap; color: #222; }
.win { margin-left: auto; display: flex; gap: 33px; padding-right: 18px; align-items: center; }
.badge { position: absolute; left: 880px; top: -29px; width: 48px; height: 48px; border-radius: 50%; background: #43c463; box-shadow: 0 0 0 2px #b9b9b9, 0 2px 4px rgba(0,0,0,.3); color: #fff; font: 700 12px "Liberation Sans", sans-serif; display: flex; align-items: flex-end; justify-content: center; padding-bottom: 6px; box-sizing: border-box; }

.menu { height: 25px; flex: none; display: flex; align-items: center; background: #f0f0f0; white-space: nowrap; padding-left: 1px; }
.mi { padding: 0 5.300px; }
.mx { display: flex; align-items: center; gap: 4px; }
.mx .tb-drop { margin-left: 2px; }
.mx-new { margin-left: 1px; }
.mx-bot { margin-left: 8px; }
.notice { width: 187px; height: 25px; line-height: 25px; margin-left: 8px; background: #f8f8f8; color: #3f6b12; padding-left: 29px; box-sizing: border-box; }
.acct { display: flex; align-items: center; margin-left: 6px; width: 222px; }
.phone { margin-left: 4px; font-size: 12.700px; }
.acct .tb-drop { margin-left: 6px; }
.bean { margin: 0 8px 0 9px; }
.more { font: 700 13px/12px "Liberation Sans", sans-serif; color: #222; align-self: flex-start; margin-top: 3px; }
.mmore { margin-left: 0; }

.row1 { height: 26px; flex: none; margin-top: 6px; display: flex; gap: 3px; }
.c1 { width: 152px; flex: none; gap: 3px; position: relative; }
.c1 .more, .c2 .more { position: absolute; right: 3px; top: 3px; margin: 0; }
.c2 { width: 545px; flex: none; padding-left: 2px; box-sizing: border-box; position: relative; }
.c3 { flex: 1; gap: 8px; position: relative; }
.more.last { position: absolute; right: 3px; top: 0; }

.body { height: 622px; flex: none; margin-top: 4px; display: flex; }
.nav { width: 145px; flex: none; display: flex; flex-direction: column; }
.nav-head { height: 13px; width: 136px; border: 1px solid #aaa; background: #f7f7f7; display: flex; justify-content: space-between; align-items: center; font-size: 12px; line-height: 13px; box-sizing: content-box; margin-bottom: 1px; }
.pin { display: flex; align-items: center; gap: 11px; padding-right: 5px; }
.nav-btn { height: 20px; width: 136px; margin: 0 0 1px 0; border: 1px solid #aaa; background: #f4f4f4; text-align: center; line-height: 20px; flex: none; }
.tree-box { flex: 1; width: 138px; box-sizing: border-box; border: 1px solid #999; border-top-color: #bbb; border-left-width: 2px; display: flex; flex-direction: column; background: #fff; min-height: 0; margin-bottom: 1px; margin-top: -1px; }
.tree-tools { height: 30px; flex: none; display: flex; gap: 6px; padding: 5px 0 0 5px; box-sizing: border-box; }
.tree-main { flex: 1; min-height: 0; display: flex; overflow: hidden; }
.tree { width: 116px; flex: none; overflow: hidden; }
.tr { height: 16px; white-space: nowrap; position: relative; display: flex; align-items: center; }
.tr-c { padding-left: 43px; background:
  repeating-linear-gradient(#666 0 1px, transparent 1px 2px) 13px 0 / 1px 100% no-repeat,
  repeating-linear-gradient(#666 0 1px, transparent 1px 2px) 33px 0 / 1px 100% no-repeat,
  repeating-linear-gradient(90deg, #666 0 1px, transparent 1px 2px) 33px 8px / 10px 1px no-repeat; }
.tr-in { display: flex; align-items: center; gap: 5px; height: 16px; padding-right: 20px; }
.tr-in.sel { background: #d0d0d0; margin-left: -2px; padding-left: 2px; }
.tr-g { padding-left: 7px; gap: 8px; background:
  repeating-linear-gradient(#666 0 1px, transparent 1px 2px) 13px 0 / 1px 100% no-repeat; }
.tr-g .tr-n { margin-left: -4px; }
.chev { background: #fff; }
.vbar { width: 15px; flex: none; background: #f0f0f0; display: flex; flex-direction: column; justify-content: flex-end; position: relative; }
.vbar svg { flex: none; }
.vbar svg:first-child { position: absolute; top: 8px; left: 0; }
.vthumb { position: absolute; left: 0; width: 15px; top: 191px; height: 197px; background: #cdcdcd; }
.hbar { height: 15px; flex: none; background: #f0f0f0; display: flex; align-items: center; padding-left: 6px; box-sizing: border-box; position: relative; }
.hend { position: absolute; right: 5px; top: 0; }
.nav-hbar { height: 18px; }
.hthumb { width: 63px; height: 15px; background: #cdcdcd; margin-left: 3px; }

.work { width: 1221px; flex: none; display: flex; flex-direction: column; }
.tbrow { display: flex; gap: 3px; flex: none; }
.r2 { height: 24px; margin-bottom: 3px; padding-left: 3px; }
.r2 .tb-chunk { padding-right: 5px; }
.r3 { height: 26px; margin-bottom: 2px; padding-left: 1px; }
.r3 .tb-chunk:first-child { padding-right: 4px; }
.r3 .tb-chunk:last-child { padding-right: 8px; }
.r4 { height: 26px; margin-bottom: 3px; padding-left: 1px; justify-content: space-between; }
.stub { width: 33px; padding-left: 2px; box-sizing: border-box; margin-right: 4px; }

.view { height: 181px; flex: none; position: relative; }
.scene { display: block; }
.panel { position: absolute; left: 9px; top: 3px; width: 166px; height: 177px; background: #fff; box-shadow: 3px 3px 8px rgba(30,35,10,.55); border: 1px solid #cfcfcf; box-sizing: border-box; }
.panel-t { height: 31px; line-height: 30px; padding-left: 8px; color: #a8a8a8; }
.panel-l { height: 143px; margin: 0 1px; border: 2px solid #8a8a8a; border-width: 1px 2px 2px 1px; box-sizing: border-box; padding-top: 1px; padding-left: 3px; background: #fff; }
.chk { display: flex; align-items: center; gap: 4px; height: 12px; font-size: 12px; color: #000; }

.snapbar { height: 31px; flex: none; display: flex; align-items: center; gap: 4px; padding-left: 11px; }
.lower { flex: 1; display: flex; min-height: 0; }
.lgrip { width: 10px; flex: none; padding-top: 2px; box-sizing: border-box; background: repeating-linear-gradient(#ddd 0 2px, transparent 2px 4px) 0 0 / 3px 100% no-repeat; padding-left: 1px; }
.lmain { flex: 1; min-width: 0; display: flex; flex-direction: column; padding-top: 3px; }
.gridbar { height: 22px; flex: none; gap: 7px; margin-bottom: 2px; padding-left: 2px; }
.frame { flex: 1; min-height: 0; border: 1px solid #b8b8b8; border-width: 1px 0 2px 2px; background: #fff; display: flex; flex-direction: column; }
.tablewrap { flex: 1; min-height: 0; position: relative; overflow: hidden; }
.grid { border-collapse: collapse; table-layout: fixed; width: 1206px; color: #111; }
.grid th, .grid td { border: 1px solid #bcbcbc; padding: 0 0 0 2px; overflow: hidden; white-space: nowrap; font-weight: 400; box-sizing: border-box; }
.grid th { height: 20px; text-align: center; background: linear-gradient(#fff, #ececec); font-size: 12px; }
.grid th.hot { background: linear-gradient(#fde5b2, #f5c670); color: #7a1a66; }
.rb td { height: 29px; background: #ccfdd6; }
.re td { height: 19px; background: #fff; }
.grid td.no { text-align: center; background: #fff; color: #222; padding: 0; }
.grid td.no.cur { background: #ffd58a; color: #7a1a66; }
.grid td.nm { line-height: 13px; box-shadow: inset -1px 0 0 #000; }
.grid td.nm div + div { line-height: 11px; }
.grid td.act { background: #a8e8d2; }
.grid td.ctr { text-align: center; padding: 0; font-weight: 700; font-size: 11px; }
.grid td.figc { padding: 0; }
.fig { margin: 0 26px 5px 23px; height: 15px; border-bottom: 2px solid #000; text-align: center; color: #e00; font: 10px/17px "DejaVu Sans Mono", monospace; box-sizing: content-box; }
.ring { position: absolute; left: 387px; top: 63px; pointer-events: none; }
.main-hbar { padding-left: 3px; }
.mthumb { width: 842px; height: 15px; background: #cdcdcd; margin-left: 4px; }

.status { height: 22px; flex: none; display: flex; gap: 3px; align-items: stretch; padding-top: 1px; box-sizing: border-box; }
.st { background: linear-gradient(#f2f2f2, #fbfbfb); box-shadow: inset 0 0 0 1px #e2e2e2; line-height: 20px; padding-left: 2px; box-sizing: border-box; white-space: nowrap; color: #111; }
.s1 { width: 147px; font-family: "DejaVu Sans Mono", monospace; font-size: 10px; }
.s2 { width: 77px; }
.s3 { width: 97px; }
.s4 { width: 47px; line-height: 20px; }
.s5 { width: 913px; }
.s6 { flex: 1; }

.task { height: 40px; flex: none; background: #050e14; display: flex; color: #fff; position: relative; }
.start { width: 48px; flex: none; background: #000; display: flex; align-items: center; justify-content: center; }
.search { width: 344px; flex: none; background: #333; display: flex; align-items: center; padding-left: 9px; box-sizing: border-box; position: relative; }
.s-t { margin-left: 4px; font-size: 13px; color: #8a8a8a; }
.mic { position: absolute; right: 13px; top: 10px; }
.apps { display: flex; padding-left: 1px; }
.appc { width: 49.500px; display: flex; align-items: center; justify-content: center; position: relative; height: 40px; padding-bottom: 2px; box-sizing: border-box; }
.appc.u::after { content: ""; position: absolute; left: 4px; right: 4px; bottom: 0; height: 2px; background: #76b9ed; }
.tray { flex: 1; display: flex; align-items: center; position: relative; }
.cpu { width: 60px; margin-left: 98px; text-align: center; font-size: 12px; line-height: 19px; color: #ddd; }
.caret { margin-left: 13px; }
.tray > .ic { margin-left: 7px; }
.zh { margin-left: 7px; font-size: 14px; font-weight: 700; }
.sg { position: relative; margin-left: 11px; }
.sg b { position: absolute; left: 0; top: 0; width: 18px; text-align: center; font: 700 13px/18px "Liberation Sans", sans-serif; color: #fff; }
.clock { margin-left: 2px; width: 64px; text-align: center; font-size: 12px; line-height: 19px; color: #ddd; }
.ntf { position: absolute; right: 25px; top: 12px; }
.ntb { position: absolute; left: 5px; top: 8px; width: 18px; height: 18px; border-radius: 50%; background: #555; color: #fff; font: 700 11px/18px "Liberation Sans", sans-serif; text-align: center; box-shadow: 0 0 0 1px #111; }
</style>
